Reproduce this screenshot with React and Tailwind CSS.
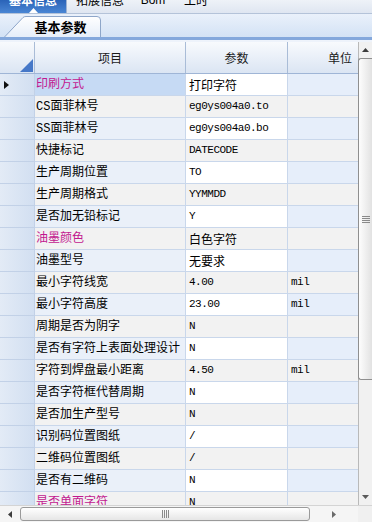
import React from "react";

const rows = [
  { name: "印刷方式", value: "打印字符", unit: "", pink: true },
  { name: "CS面菲林号", value: "eg0ys004a0.to", unit: "" },
  { name: "SS面菲林号", value: "eg0ys004a0.bo", unit: "" },
  { name: "快捷标记", value: "DATECODE", unit: "" },
  { name: "生产周期位置", value: "TO", unit: "" },
  { name: "生产周期格式", value: "YYMMDD", unit: "" },
  { name: "是否加无铅标记", value: "Y", unit: "" },
  { name: "油墨颜色", value: "白色字符", unit: "", pink: true },
  { name: "油墨型号", value: "无要求", unit: "" },
  { name: "最小字符线宽", value: "4.00", unit: "mil" },
  { name: "最小字符高度", value: "23.00", unit: "mil" },
  { name: "周期是否为阴字", value: "N", unit: "" },
  { name: "是否有字符上表面处理设计", value: "N", unit: "" },
  { name: "字符到焊盘最小距离", value: "4.50", unit: "mil" },
  { name: "是否字符框代替周期", value: "N", unit: "" },
  { name: "是否加生产型号", value: "N", unit: "" },
  { name: "识别码位置图纸", value: "/", unit: "" },
  { name: "二维码位置图纸", value: "/", unit: "" },
  { name: "是否有二维码", value: "N", unit: "" },
  { name: "是否单面字符", value: "N", unit: "", pink: true },
];

const cjk = "font-['Liberation_Mono','Noto_Sans_CJK_SC',monospace]";
const mono = "font-['Liberation_Mono',monospace]";

function hasCjk(s) {
  return /[\u4e00-\u9fff]/.test(s);
}

function TopTabs() {
  return (
    <div className="h-[14px] flex overflow-hidden bg-gradient-to-b from-[#eef2f8] to-[#dfe6f1] border-b border-[#b4c3d9] font-['Noto_Sans_CJK_SC',sans-serif] text-[12px] leading-[14px]">
      <div className="relative w-[67px] bg-gradient-to-b from-[#2a63b8] to-[#4a86d4] text-white font-bold flex justify-center border-r border-[#9fb3d2]">
        <span className="block -mt-[7px]">基本信息</span>
        <svg className="absolute left-[29px] bottom-0" width="9" height="5" viewBox="0 0 9 5">
          <path d="M0 5 L4.5 0 L9 5 Z" fill="#ffffff" />
        </svg>
      </div>
      <div className="w-[66px] flex justify-center text-black">
        <span className="block -mt-[7px]">拓展信息</span>
      </div>
      <div className="w-[40px] flex justify-center text-black font-['Liberation_Sans',sans-serif]">
        <span className="block -mt-[7px]">Bom</span>
      </div>
      <div className="w-[46px] flex justify-center text-black">
        <span className="block -mt-[7px]">工时</span>
      </div>
    </div>
  );
}

function SubTabs() {
  return (
    <div className="h-[23px] bg-gradient-to-b from-[#eaf1fb] to-[#d3e2f5] flex items-end pl-[4px]">
      <div className="relative w-[97px] h-[21px] flex items-center justify-center pl-[16px]">
        <svg className="absolute inset-0" width="97" height="21" viewBox="0 0 97 21">
          <defs>
            <linearGradient id="tabg" x1="0" y1="0" x2="0" y2="1">
              <stop offset="0" stopColor="#ffffff" />
              <stop offset="1" stopColor="#e6eef9" />
            </linearGradient>
          </defs>
          <path
            d="M0.5 21 L19 1.5 Q20 0.5 22 0.5 L93 0.5 Q96.5 0.5 96.5 4 L96.5 21"
            fill="url(#tabg)"
            stroke="#8ea6c9"
            strokeWidth="1"
          />
        </svg>
        <span className="relative font-bold text-[13px] text-black font-['Noto_Sans_CJK_SC',sans-serif] leading-none">
          基本参数
        </span>
      </div>
    </div>
  );
}

function HeaderRow() {
  const cell =
    "h-full flex items-center justify-center border-r border-[#a9bcd7] bg-gradient-to-b from-[#f8fafd] to-[#dbe5f3] text-[12px] text-[#1a1a1a] font-['Noto_Sans_CJK_SC',sans-serif]";
  return (
    <div className="flex h-[32px] border-b border-[#9fb5d6] shrink-0">
      <div className={`${cell} relative w-[35px] shrink-0`}>
        <svg className="absolute right-[1px] bottom-[1px]" width="13" height="13" viewBox="0 0 13 13">
          <path d="M13 0 L13 13 L0 13 Z" fill="#4678c8" />
        </svg>
      </div>
      <div className={`${cell} w-[151px] shrink-0`}>项目</div>
      <div className={`${cell} w-[102px] shrink-0`}>参数</div>
      <div className={`${cell} w-[104px] shrink-0 border-r-0`}>单位</div>
    </div>
  );
}

function DataRow({ row, index }) {
  const odd = index % 2 === 0;
  const selected = index === 0;
  const nameBg = selected ? "bg-[#c6daf4]" : odd ? "bg-[#eaf0f9]" : "bg-[#f2f2f2]";
  const valueBg = odd ? "bg-white" : "bg-[#f2f2f2]";
  const unitBg = odd ? "bg-[#e6eefa]" : "bg-[#f2f2f2]";
  const valueFont = hasCjk(row.value)
    ? "font-['Noto_Sans_CJK_SC',sans-serif] text-[12px]"
    : `${mono} text-[11px] tracking-[-0.5px]`;
  return (
    <div className="flex h-[22px] shrink-0">
      <div className="w-[35px] shrink-0 flex items-center pl-[4px] bg-gradient-to-r from-[#e3ebf6] to-[#d2dff1] border-r border-[#95acd0] border-b border-[#c2d1e7]">
        {selected && (
          <svg width="5" height="8" viewBox="0 0 5 8">
            <path d="M0 0 L5 4 L0 8 Z" fill="#111111" />
          </svg>
        )}
      </div>
      <div
        className={`w-[151px] shrink-0 flex items-center pl-[1px] border-r border-[#aebfd9] border-b border-[#c9d7eb] whitespace-nowrap overflow-hidden text-[12px] ${cjk} ${nameBg} ${
          row.pink ? "text-[#c2188f]" : "text-black"
        }`}
      >
        {row.name}
      </div>
      <div
        className={`w-[102px] shrink-0 flex items-center pl-[3px] border-r border-[#c9d7eb] border-b border-[#c9d7eb] whitespace-nowrap text-black ${valueFont} ${valueBg}`}
      >
        {row.value}
      </div>
      <div
        className={`w-[104px] shrink-0 flex items-center pl-[3px] border-b border-[#c9d7eb] text-black ${mono} text-[11px] tracking-[-0.5px] ${unitBg}`}
      >
        {row.unit}
      </div>
    </div>
  );
}

function VScroll() {
  return (
    <div className="w-[14px] shrink-0 bg-[#f1f1f1] border-l border-[#b9b9b9] flex flex-col">
      <div className="h-[16px] flex items-center justify-center">
        <svg width="7" height="4" viewBox="0 0 7 4">
          <path d="M0 4 L3.5 0 L7 4 Z" fill="#3c3c3c" />
        </svg>
      </div>
      <div className="h-[322px] -ml-[1px] border border-r-0 border-[#8f8f8f] rounded-l-[3px] bg-gradient-to-r from-[#fdfdfd] to-[#e2e2e2] flex items-center justify-center">
        <div className="flex flex-col gap-[1px] w-[8px]">
          <div className="h-px bg-[#8a8a8a]" />
          <div className="h-px bg-[#8a8a8a]" />
          <div className="h-px bg-[#8a8a8a]" />
          <div className="h-px bg-[#8a8a8a]" />
        </div>
      </div>
      <div className="flex-1" />
      <div className="h-[16px] flex items-center justify-center">
        <svg width="7" height="4" viewBox="0 0 7 4">
          <path d="M0 0 L7 0 L3.5 4 Z" fill="#5a5a5a" />
        </svg>
      </div>
    </div>
  );
}

function HScroll() {
  return (
    <div className="h-[17px] flex shrink-0 bg-[#f5f5f5] border-t border-[#d4d4d4]">
      <div className="w-[20px] flex items-center justify-center">
        <svg width="4" height="7" viewBox="0 0 4 7">
          <path d="M4 0 L4 7 L0 3.5 Z" fill="#3c3c3c" />
        </svg>
      </div>
      <div className="w-[290px] my-[1px] border border-[#9a9a9a] rounded-[3px] bg-gradient-to-b from-[#ffffff] to-[#e6e6e6] flex items-center justify-center">
        <div className="flex gap-[1px] h-[8px]">
          <div className="w-px bg-[#8a8a8a]" />
          <div className="w-px bg-[#8a8a8a]" />
          <div className="w-px bg-[#8a8a8a]" />
          <div className="w-px bg-[#8a8a8a]" />
        </div>
      </div>
      <div className="w-[48px] flex items-center justify-center">
        <svg width="4" height="7" viewBox="0 0 4 7">
          <path d="M0 0 L4 3.5 L0 7 Z" fill="#6a6a6a" />
        </svg>
      </div>
      <div className="w-[14px] bg-[#f0f0f0]" />
    </div>
  );
}

export default function App() {
  return (
    <div className="w-[372px] h-[522px] overflow-hidden flex flex-col bg-white">
      <TopTabs />
      <SubTabs />
      <div className="h-[3px] bg-[#84a8dc] shrink-0" />
      <div className="h-[2px] bg-[#eef3fb] shrink-0" />
      <div className="flex flex-1 min-h-0">
        <div className="w-[358px] overflow-hidden flex flex-col">
          <HeaderRow />
          {rows.map((row, i) => (
            <DataRow key={row.name} row={row} index={i} />
          ))}
        </div>
        <VScroll />
      </div>
      <HScroll />
    </div>
  );
}
